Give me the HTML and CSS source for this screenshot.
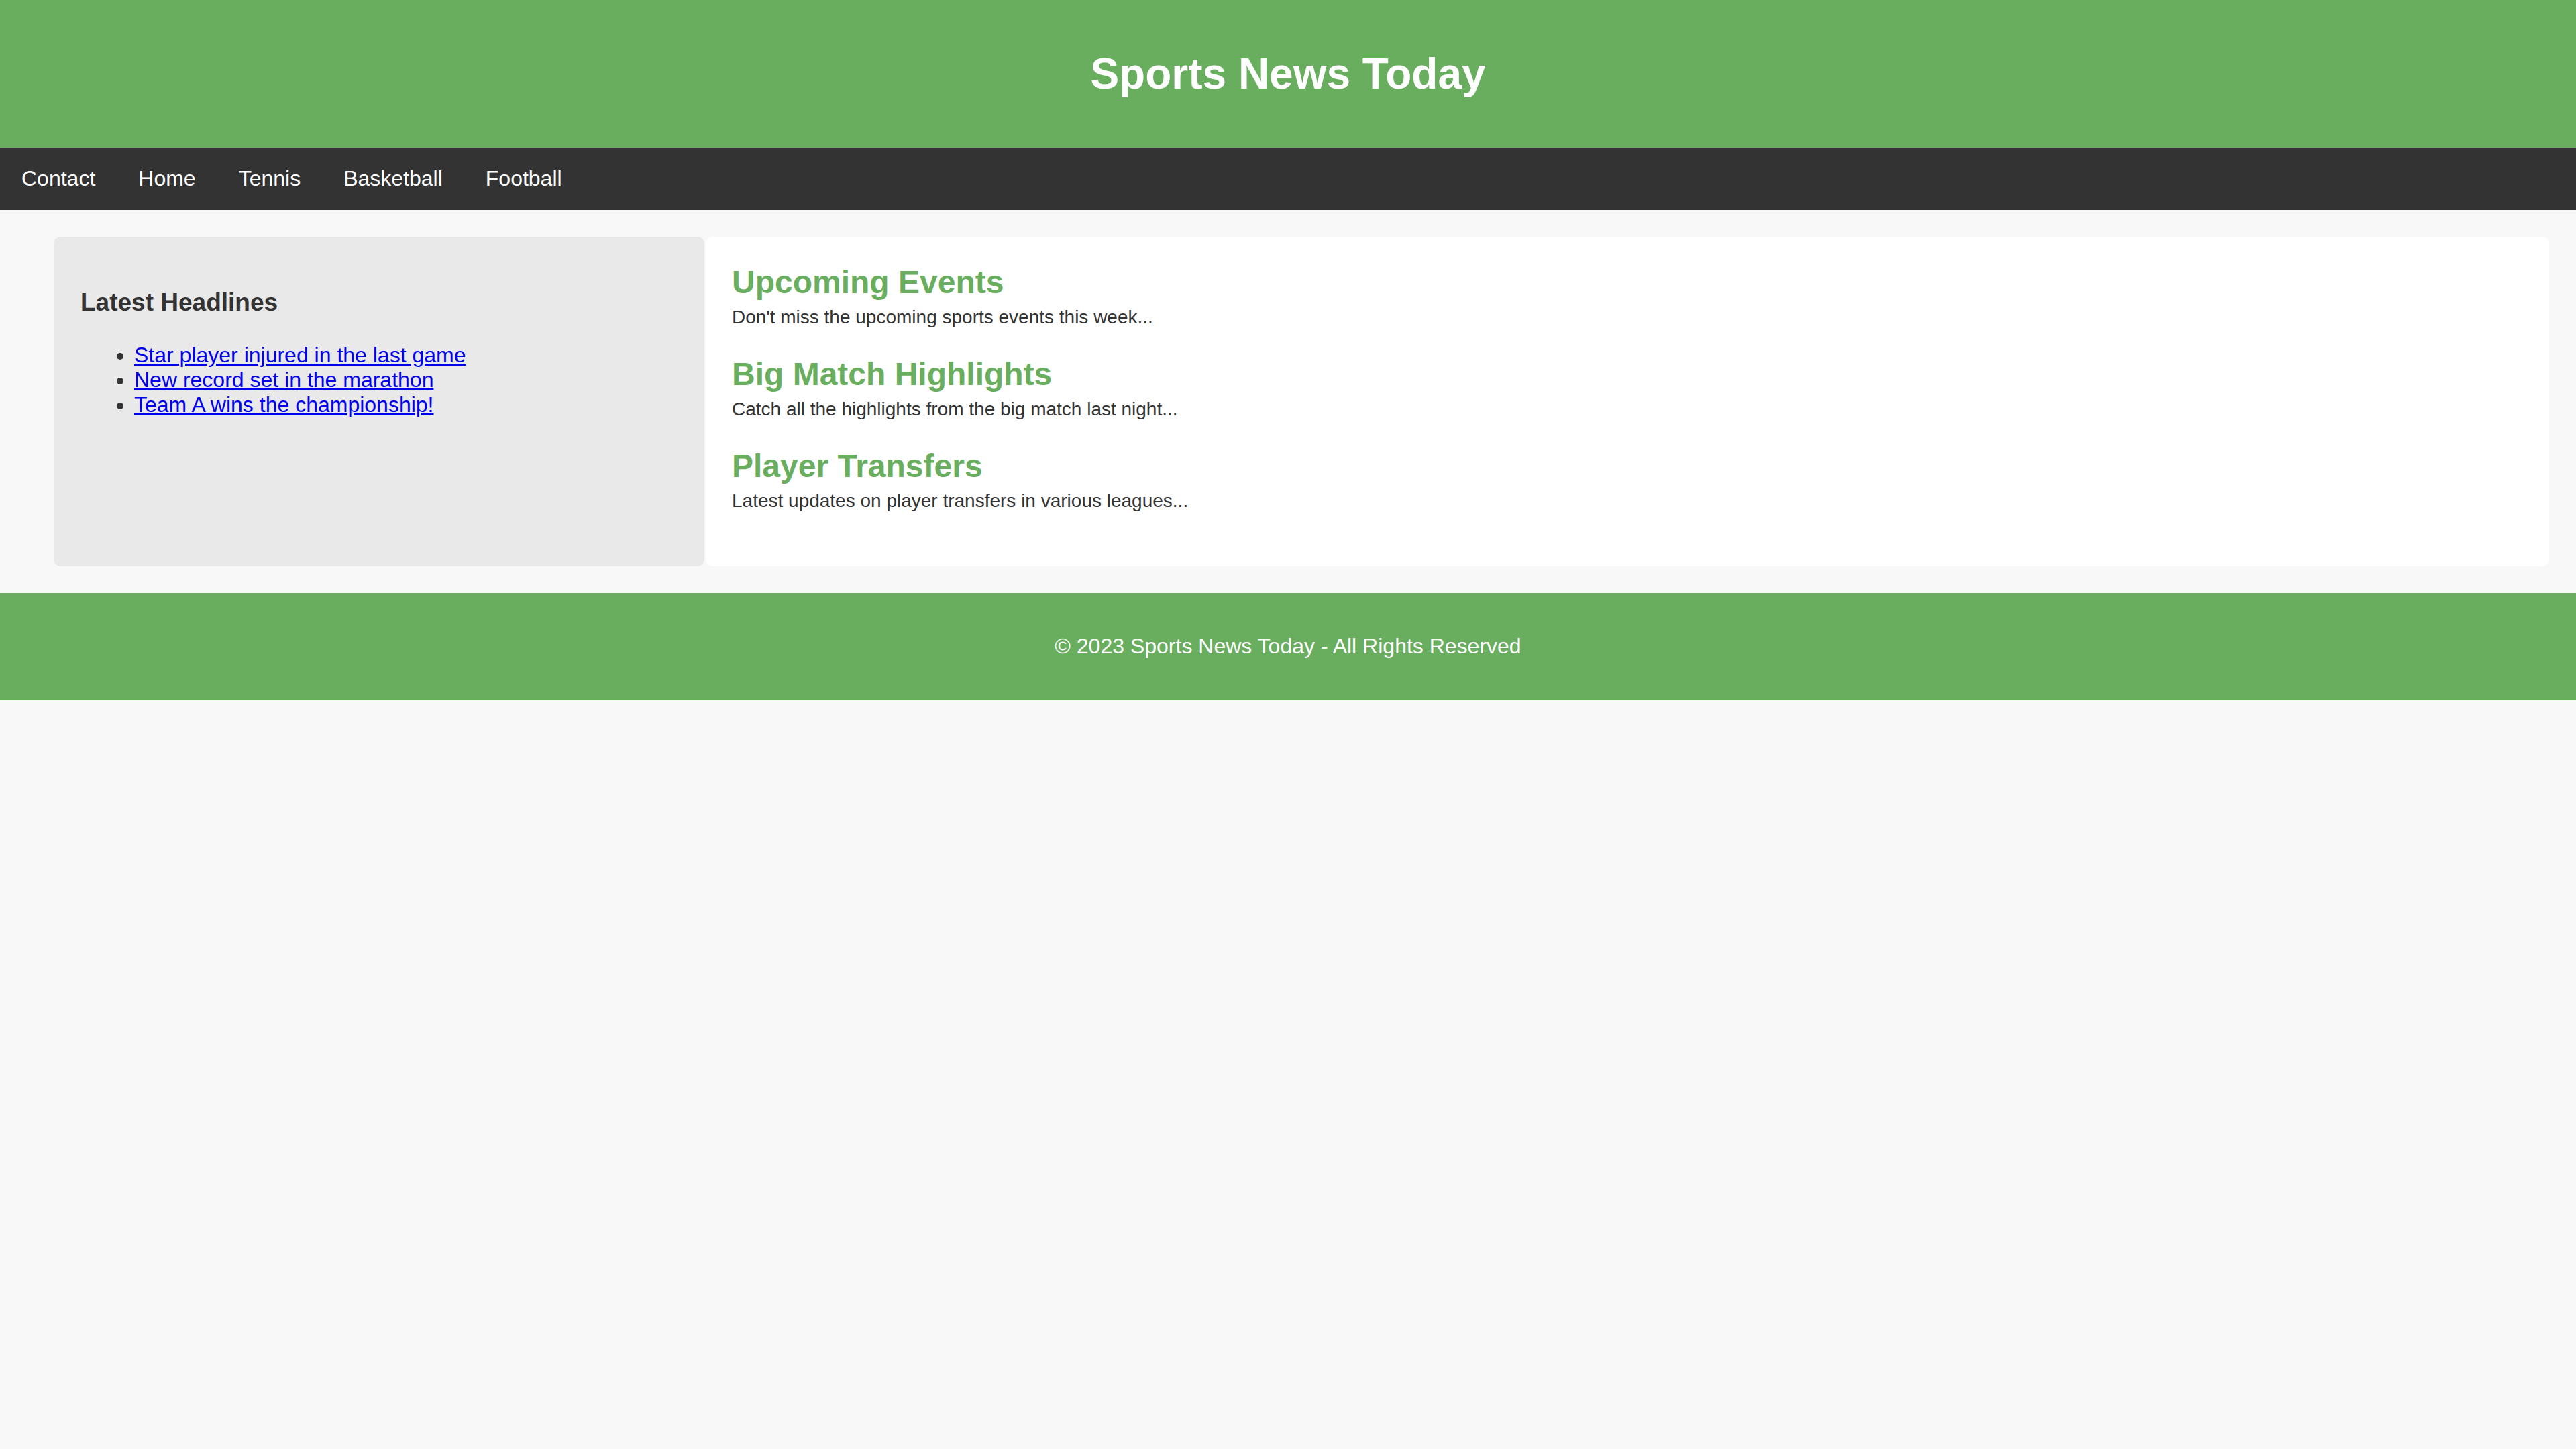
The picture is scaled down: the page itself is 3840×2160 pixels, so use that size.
FILE: index.html
```html
<!DOCTYPE html>
<html lang="en">
<head>
<meta charset="utf-8">
<title>Sports News Today</title>
<link rel="stylesheet" href="styles.css">
</head>
<body>
<header class="site-header">
  <h1 class="site-title">Sports News Today</h1>
</header>
<nav class="site-nav">
  <a class="nav-link" href="#">Contact</a>
  <a class="nav-link" href="#">Home</a>
  <a class="nav-link" href="#">Tennis</a>
  <a class="nav-link" href="#">Basketball</a>
  <a class="nav-link" href="#">Football</a>
</nav>
<div class="container">
  <aside class="sidebar">
    <h3 class="sidebar-title">Latest Headlines</h3>
    <ul class="headline-list">
      <li><a class="headline-link" href="#">Star player injured in the last game</a></li>
      <li><a class="headline-link" href="#">New record set in the marathon</a></li>
      <li><a class="headline-link" href="#">Team A wins the championship!</a></li>
    </ul>
  </aside>
  <main class="main-content">
    <article class="article">
      <h2 class="article-title">Upcoming Events</h2>
      <p class="article-text">Don't miss the upcoming sports events this week...</p>
    </article>
    <article class="article">
      <h2 class="article-title">Big Match Highlights</h2>
      <p class="article-text">Catch all the highlights from the big match last night...</p>
    </article>
    <article class="article">
      <h2 class="article-title">Player Transfers</h2>
      <p class="article-text">Latest updates on player transfers in various leagues...</p>
    </article>
  </main>
</div>
<footer class="site-footer">
  <p class="footer-text">© 2023 Sports News Today - All Rights Reserved</p>
</footer>
</body>
</html>
```
FILE: styles.css
```css
html, body {
  margin: 0;
  padding: 0;
}
body {
  background: #f8f8f8;
  color: #333333;
  font-family: "Liberation Sans", Arial, Helvetica, sans-serif;
  font-size: 32px;
}
.site-header {
  background: #68ae5e;
  color: #ffffff;
  text-align: center;
  padding: 30px 0;
}
.site-title {
  margin: 0.67em 0;
  font-size: 64px;
  font-weight: bold;
  line-height: normal;
}
.site-nav {
  background: #333333;
  display: flex;
}
.nav-link {
  display: block;
  color: #ffffff;
  text-decoration: none;
  padding: 28px 32px;
  line-height: normal;
}
.container {
  display: flex;
  align-items: stretch;
  gap: 2px;
  padding: 40px 40px 40px 80px;
}
.sidebar {
  width: 970px;
  flex: none;
  box-sizing: border-box;
  background: #e9e9e9;
  border-radius: 10px;
  padding: 40px;
}
.sidebar-title {
  font-size: 37px;
  margin: 37px 0 39px;
  line-height: normal;
}
.headline-list {
  margin: 32px 0;
  padding-left: 80px;
}
.headline-list li {
  line-height: normal;
}
.headline-link {
  color: #0000ee;
  text-decoration: underline;
}
.main-content {
  flex: 1;
  background: #ffffff;
  border-radius: 10px;
  padding: 40px 39px 40px;
}
.article {
  margin-bottom: 41px;
}
.article-title {
  color: #68ae5e;
  font-size: 48px;
  margin: 0 0 9px;
  line-height: normal;
}
.article-text {
  font-size: 28px;
  margin: 0;
  line-height: normal;
}
.site-footer {
  background: #68ae5e;
  color: #ffffff;
  text-align: center;
  padding: 30px 0;
}
.footer-text {
  margin: 31px 0 32px;
  line-height: normal;
}
```
